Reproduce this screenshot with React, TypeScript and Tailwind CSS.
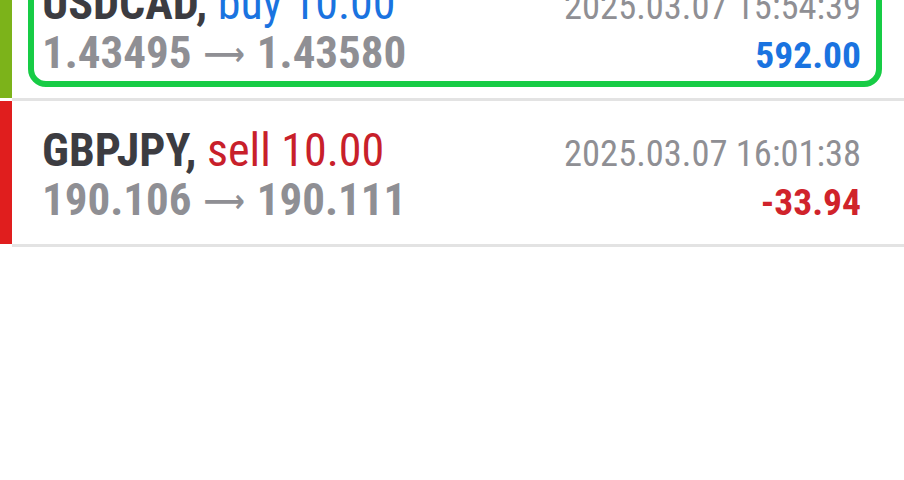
const font = "font-['Roboto_Condensed','Roboto',sans-serif] [font-stretch:condensed]";

type Trade = {
  symbol: string;
  side: "buy" | "sell";
  volume: string;
  open: string;
  close: string;
  time: string;
  profit: string;
};

const TradeText = ({ t }: { t: Trade }) => {
  const sideColor = t.side === "buy" ? "text-[#1a73e0]" : "text-[#c8202a]";
  const profitColor = t.profit.startsWith("-") ? "text-[#d0232b]" : "text-[#1a73e0]";
  return (
    <div className={`flex flex-col ${font}`}>
      <div className="flex items-baseline justify-between h-[50px] leading-[50px]">
        <span className="text-[46px] whitespace-nowrap">
          <span className="font-bold text-[#3c3c41]">{t.symbol},</span>{" "}
          <span className={sideColor}>
            {t.side} {t.volume}
          </span>
        </span>
        <span className="text-[36.5px] text-[#8f8f94] whitespace-nowrap">{t.time}</span>
      </div>
      <div className="flex items-baseline justify-between h-[50px] leading-[50px]">
        <span className="text-[45px] font-bold text-[#8f8f94] whitespace-nowrap flex items-center">
          {t.open}
          <span className="font-['DejaVu_Sans',sans-serif] font-bold text-[32px] leading-none mx-[12px] mt-[2px]">⟶</span>
          {t.close}
        </span>
        <span className={`text-[37.5px] font-bold whitespace-nowrap ${profitColor}`}>{t.profit}</span>
      </div>
    </div>
  );
};

const trades: Trade[] = [
  {
    symbol: "USDCAD",
    side: "buy",
    volume: "10.00",
    open: "1.43495",
    close: "1.43580",
    time: "2025.03.07 15:54:39",
    profit: "592.00",
  },
  {
    symbol: "GBPJPY",
    side: "sell",
    volume: "10.00",
    open: "190.106",
    close: "190.111",
    time: "2025.03.07 16:01:38",
    profit: "-33.94",
  },
];

export default function App() {
  return (
    <div className="w-[904px] h-[480px] bg-white overflow-hidden">
      {/* selected row, scrolled partly off the top */}
      <div className="flex h-[143px] -mt-[45px]">
        <div className="w-[12px] bg-[#7cb31a] shrink-0" />
        <div className="flex-1 flex flex-col justify-end pl-[16px] pr-[22px] pb-[11px]">
          <div className="border-[6px] border-[#17cc45] rounded-[18px] pl-[8px] pr-[15px] pt-[20px] pb-[3px]">
            <TradeText t={trades[0]} />
          </div>
        </div>
      </div>
      <div className="h-[3px] ml-[12px] bg-[#e3e3e3]" />
      <div className="flex h-[143px]">
        <div className="w-[12px] bg-[#e01e1e] shrink-0" />
        <div className="flex-1 pl-[30px] pr-[43px] pt-[24px]">
          <TradeText t={trades[1]} />
        </div>
      </div>
      <div className="h-[3px] ml-[12px] bg-[#e3e3e3]" />
    </div>
  );
}
